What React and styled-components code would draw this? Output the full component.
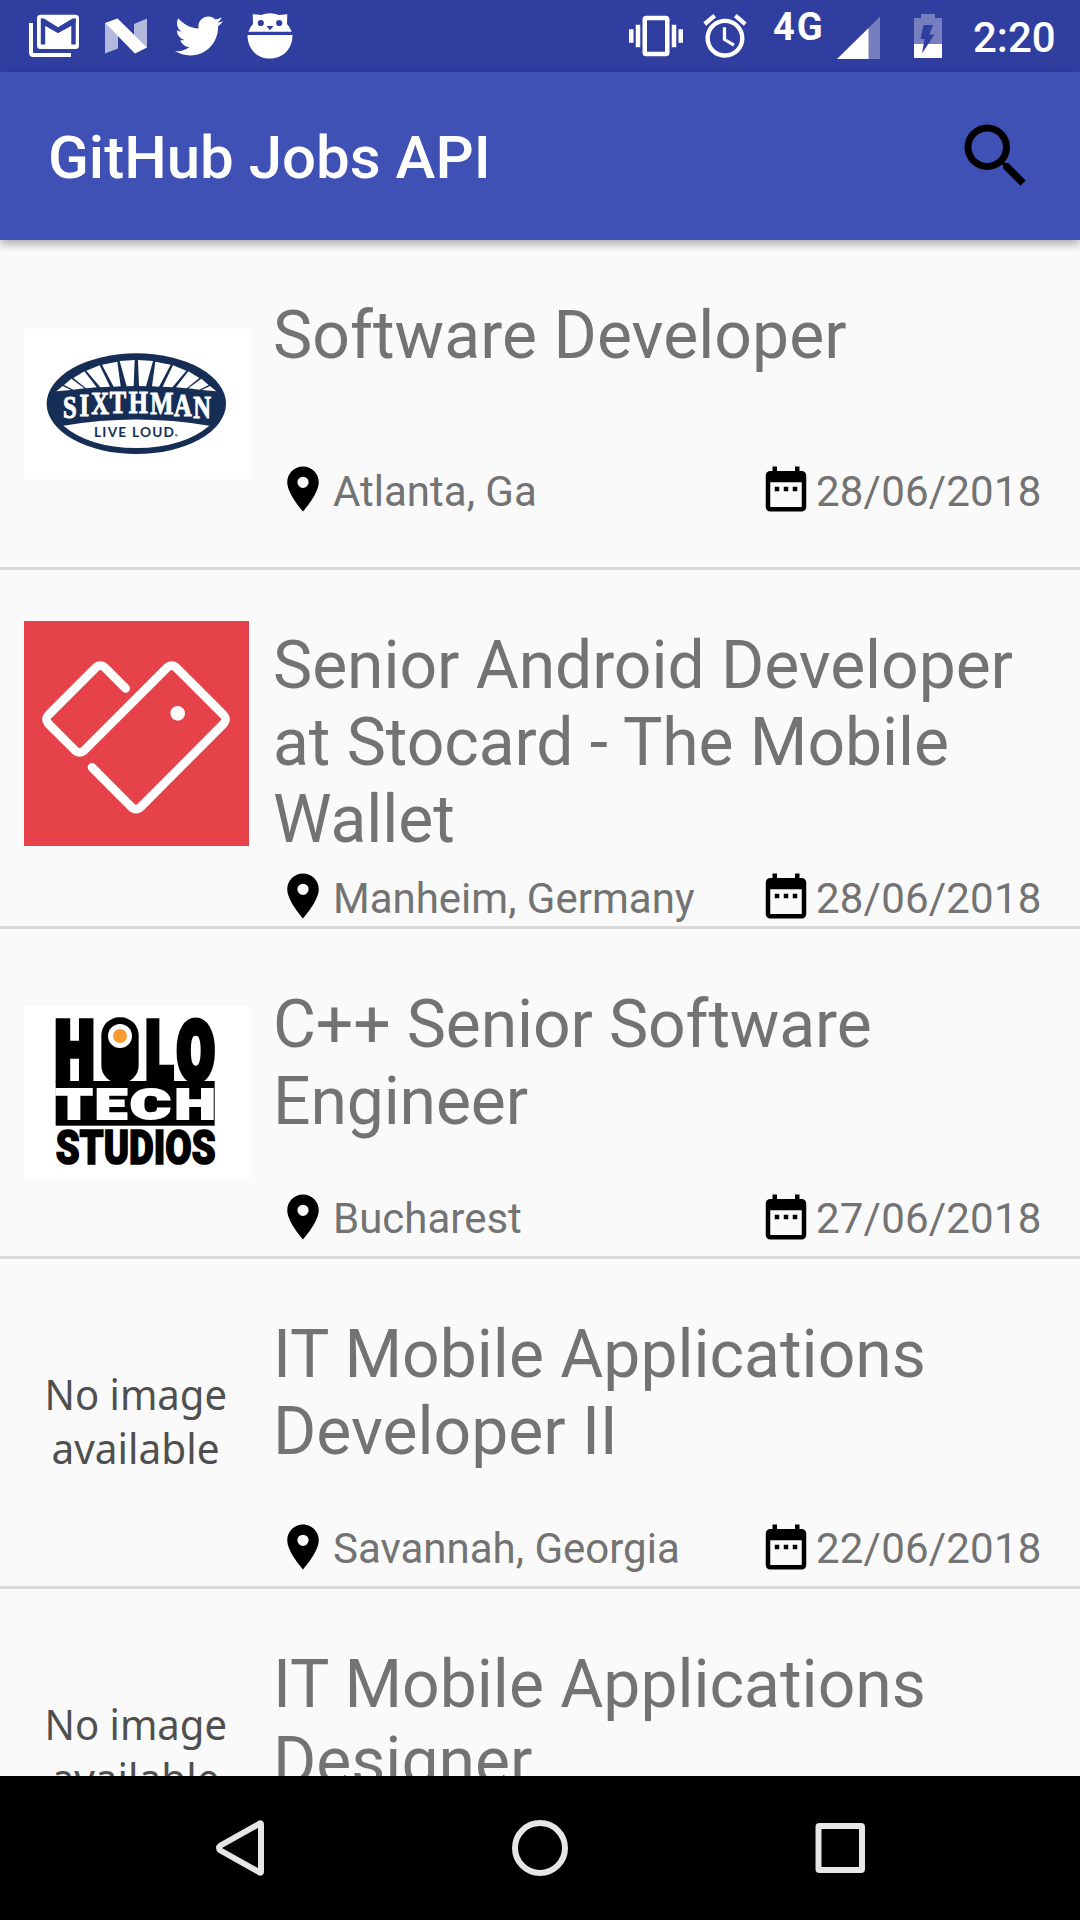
import React from "react";
import styled, { createGlobalStyle } from "styled-components";
import { MdPlace, MdDateRange, MdSearch, MdVibration, MdAccessAlarm } from "react-icons/md";
import { FaTwitter } from "react-icons/fa";

const GlobalStyle = createGlobalStyle`
  * { box-sizing: border-box; }
  body { margin: 0; background: #fafafa; font-family: Roboto, sans-serif; }
  svg { display: block; flex: none; overflow: visible; }
`;

const Screen = styled.div`
  display: flex;
  flex-direction: column;
  width: 1080px;
  height: 1920px;
  overflow: hidden;
  background: #fafafa;
`;

const StatusBar = styled.header`
  display: flex;
  align-items: center;
  justify-content: space-between;
  flex: none;
  height: 72px;
  padding: 0 23px 0 29px;
  background: #303f9f;
  color: #fff;
`;

const StatusGroup = styled.div`
  display: flex;
  align-items: center;
  height: 72px;
`;

const StatusItem = styled.span`
  display: flex;
  flex: none;
  width: ${(p) => p.$width}px;
  margin-left: ${(p) => p.$gap || 0}px;
  justify-content: center;
`;

const NetworkType = styled.span`
  flex: none;
  width: 64px;
  margin-left: 22px;
  padding-bottom: 19px;
  font-size: 38px;
  line-height: 44px;
  font-weight: 700;
  letter-spacing: 2px;
`;

const Clock = styled.time`
  width: 84px;
  margin-left: 31px;
  padding-top: 2px;
  font-size: 42px;
  line-height: 49px;
  font-weight: 500;
  white-space: nowrap;
`;

const AppBar = styled.div`
  position: relative;
  z-index: 1;
  display: flex;
  align-items: center;
  justify-content: space-between;
  flex: none;
  height: 168px;
  padding: 0 42px 0 48px;
  background: #3f51b5;
  box-shadow: 0 4px 9px rgba(0, 0, 0, 0.32);
`;

const AppTitle = styled.h1`
  margin: 0;
  padding-top: 4px;
  color: #fff;
  font-size: 60px;
  line-height: 70px;
  font-weight: 500;
`;

const SearchButton = styled.button`
  display: flex;
  padding: 0;
  border: 0;
  background: none;
  color: #000;
`;

const List = styled.ul`
  flex: 1;
  min-height: 0;
  margin: 0;
  padding: 0;
  overflow: hidden;
  list-style: none;
`;

const Row = styled.li`
  height: ${(p) => p.$height + 3}px;
  border-bottom: 3px solid #dadada;
`;

const RowBody = styled.article`
  display: flex;
  align-items: center;
  gap: 24px;
  height: 327px;
  padding: 0 24px;
`;

const Details = styled.div`
  display: flex;
  flex-direction: column;
  flex: 1;
  min-width: 0;
  height: 327px;
  padding-top: 57px;
`;

const JobTitle = styled.h2`
  flex: none;
  margin: 0;
  color: #737373;
  font-size: 66px;
  line-height: 77px;
  font-weight: 400;
  letter-spacing: ${(p) => p.$tracking || 0}px;
  white-space: pre-line;
`;

const Meta = styled.div`
  display: flex;
  align-items: center;
  flex: 1 1 0;
  min-height: 0;
  margin-top: 37px;
  padding-left: 3px;
`;

const MetaItem = styled.span`
  display: flex;
  align-items: center;
  flex: none;
  gap: 3px;
  width: ${(p) => p.$width}px;
  color: #000;
`;

const MetaText = styled.span`
  padding-top: 4px;
  color: #737373;
  font-size: 42px;
  line-height: 49px;
  letter-spacing: ${(p) => p.$tracking || 0}px;
  white-space: nowrap;
`;

const NavBar = styled.nav`
  display: flex;
  align-items: center;
  justify-content: center;
  gap: 240px;
  flex: none;
  height: 144px;
  background: #000;
`;

const GmailIcon = () => (
  <svg width="50" height="72" viewBox="29 0 50 72">
    <path d="M31 23V52.5Q31 55 33.500 55H71" fill="none" stroke="#fff" strokeWidth="4" />
    <rect x="37" y="14.700" width="42" height="34.300" rx="3.500" fill="#fff" />
    <path d="M43 44.500V22L58 30.500L73.500 22V44.500" fill="none" stroke="#303f9f" strokeWidth="4.400" />
    <path d="M41 18.500H44L58 27.200L72.500 18.500H75.700V23L58 33L41 23Z" fill="#303f9f" />
  </svg>
);

const NougatIcon = () => (
  <svg width="42" height="72" viewBox="105 0 42 72">
    <path d="M105 23L118 36V48.500L105 53.500Z M134 24L147 18.500V48L134 35Z" fill="#b3b8dd" />
    <path d="M105 23L117.500 18.500L147 47.500L135 53.500Z" fill="#fff" />
  </svg>
);

const OwlIcon = () => (
  <svg width="46" height="72" viewBox="247 0 46 72">
    <path d="M248.300 31.800Q250 27 253 24L252.700 14.200L261 15Q270 11.500 279 15L287.300 14.200L287 24Q290 27 291.700 31.800Z" fill="#fff" />
    <path d="M247.500 35H292.500C292.500 49 283 58.500 270 58.500S247.500 49 247.500 35Z" fill="#fff" />
    <circle cx="260.800" cy="23" r="3.100" fill="#303f9f" />
    <circle cx="279.200" cy="23" r="3.100" fill="#303f9f" />
    <path d="M266.500 26H273.500L270 30.300Z" fill="#303f9f" />
  </svg>
);

const SignalIcon = () => (
  <svg width="43" height="72" viewBox="837 0 43 72">
    <path d="M880 16.500V59H868V28.500Z" fill="#757ebe" />
    <path d="M868.500 28V59H837Z" fill="#fff" />
  </svg>
);

const BatteryIcon = () => (
  <svg width="28" height="72" viewBox="914 0 28 72">
    <path d="M921 14H935V18H942V44H914V18H921Z" fill="#757ebe" />
    <path d="M914 44H942V58H914Z" fill="#fff" />
    <path d="M923.500 25H933L929.500 34.500H934.500L922 53.500L924.500 39H920.500Z" fill="#303f9f" />
  </svg>
);

const RAYS = [
  "359,153 404,150 401,228 380,229",
  "306,164 352,155 362,229 341,230",
  "259,182 299,166 330,230 301,232",
  "220,204 253,184 290,232 258,235",
  "192,225 214,206 253,235 220,239",
  "169,244 188,228 213,240",
];

const SixthmanLogo = () => (
  <svg width="225" height="150" viewBox="72 57 675 450">
    <rect x="72" y="57" width="675" height="450" fill="#fff" />
    <ellipse cx="409" cy="281" rx="269" ry="151" fill="#162e56" />
    {RAYS.map((points) => (
      <g key={points} fill="#fff">
        <polygon points={points} />
        <polygon points={points} transform="translate(818 0) scale(-1 1)" />
      </g>
    ))}
    <path d="M190 347Q409 310 628 347Q550 413 409 414Q268 413 190 347Z" fill="#fff" />
    <text
      transform="scale(0.8 1)"
      x="236 298 342 412 483 563 653 725"
      y="323 317 312 309 309 312 317 324"
      fill="#fff"
      stroke="#fff"
      strokeWidth="3"
      fontFamily="'Liberation Serif', serif"
      fontWeight="700"
      fontSize="92"
    >
      SIXTHMAN
    </text>
    <text x="282" y="381" fill="#162e56" fontFamily="Lato, sans-serif" fontWeight="700" fontSize="41" textLength="240" lengthAdjust="spacing">LIVE LOUD</text>
    <circle cx="529" cy="376" r="4" fill="#7784a0" />
  </svg>
);

const StocardLogo = () => (
  <svg width="225" height="225" viewBox="72 63 675 675">
    <rect x="72" y="63" width="675" height="675" fill="#e64249" />
    <g fill="none" stroke="#fff" strokeWidth="26" strokeLinecap="round" strokeLinejoin="round">
      <path d="M377 265L317 205Q301 189 285 205L147 343Q132 358 147 373L224 450Q239 465 254 450L499 205Q515 189 531 205L669 343Q684 358 669 373L423 620Q408 635 393 620L276 502" />
    </g>
    <circle cx="533" cy="340" r="22" fill="#fff" />
  </svg>
);

const LogoWord = ({ x, y, size, width, fill = "#000", outline = 0, children }) => (
  <text
    x={x}
    y={y}
    fill={fill}
    stroke={fill}
    strokeWidth={outline}
    fontFamily="Roboto, sans-serif"
    fontWeight="900"
    fontSize={size}
    textLength={width}
    lengthAdjust="spacingAndGlyphs"
  >
    {children}
  </text>
);

const HolotechLogo = () => (
  <svg width="225" height="173" viewBox="72 48 675 519">
    <rect x="72" y="48" width="675" height="519" fill="#fff" />
    <rect x="167" y="273" width="477" height="134" />
    <LogoWord x="166" y="267" size="238" width="116" outline="22">H</LogoWord>
    <rect x="304" y="82" width="112" height="198" rx="54" />
    <LogoWord x="438" y="267" size="238" width="80" outline="22">L</LogoWord>
    <LogoWord x="532" y="267" size="238" width="111" outline="22">O</LogoWord>
    <circle cx="360" cy="138" r="36" fill="#fff" />
    <circle cx="360" cy="138" r="21" fill="#f99b33" />
    <LogoWord x="167" y="386" size="126" width="110" fill="#fff" outline="6">T</LogoWord>
    <LogoWord x="285" y="386" size="126" width="96" fill="#fff" outline="6">E</LogoWord>
    <LogoWord x="390" y="386" size="126" width="122" fill="#fff" outline="6">C</LogoWord>
    <LogoWord x="524" y="386" size="126" width="122" fill="#fff" outline="6">H</LogoWord>
    <LogoWord x="167" y="521" size="146" width="480" outline="5">STUDIOS</LogoWord>
  </svg>
);

const NoImage = () => (
  <svg width="225" height="225" viewBox="24 51 225 225" fill="#4f4f4f" fontFamily="'Noto Sans', sans-serif" fontSize="42.500">
    <text x="44.500" y="150.500" textLength="182.500" lengthAdjust="spacingAndGlyphs">No image</text>
    <text x="51.500" y="205" textLength="168" lengthAdjust="spacingAndGlyphs">available</text>
  </svg>
);

const JOBS = [
  { id: 1, title: "Software Developer", tracking: 0.06, place: "Atlanta, Ga", date: "28/06/2018", Logo: SixthmanLogo, height: 327 },
  { id: 2, title: "Senior Android Developer\nat Stocard - The Mobile\nWallet", tracking: -0.06, place: "Manheim, Germany", date: "28/06/2018", Logo: StocardLogo, height: 356 },
  { id: 3, title: "C++ Senior Software\nEngineer", tracking: -0.12, place: "Bucharest", date: "27/06/2018", Logo: HolotechLogo, height: 327 },
  { id: 4, title: "IT Mobile Applications\nDeveloper II", place: "Savannah, Georgia", date: "22/06/2018", Logo: NoImage, height: 327 },
  { id: 5, title: "IT Mobile Applications\nDesigner", Logo: NoImage, height: 327 },
];

const JobRow = ({ job }) => (
  <Row $height={job.height}>
    <RowBody>
      <job.Logo />
      <Details>
        <JobTitle $tracking={job.tracking}>{job.title}</JobTitle>
        {job.place && (
          <Meta>
            <MetaItem $width={483}>
              <MdPlace size={54} />
              <MetaText>{job.place}</MetaText>
            </MetaItem>
            <MetaItem $width={290}>
              <MdDateRange size={54} />
              <MetaText $tracking={0.2}>{job.date}</MetaText>
            </MetaItem>
          </Meta>
        )}
      </Details>
    </RowBody>
  </Row>
);

export default function App() {
  return (
    <Screen>
      <GlobalStyle />
      <StatusBar>
        <StatusGroup>
          <StatusItem $width={50}><GmailIcon /></StatusItem>
          <StatusItem $width={42} $gap={26}><NougatIcon /></StatusItem>
          <StatusItem $width={48} $gap={28}><FaTwitter size={48} /></StatusItem>
          <StatusItem $width={46} $gap={24}><OwlIcon /></StatusItem>
        </StatusGroup>
        <StatusGroup>
          <StatusItem $width={54}><MdVibration size={54} /></StatusItem>
          <StatusItem $width={52} $gap={16}><MdAccessAlarm size={52} /></StatusItem>
          <NetworkType>4G</NetworkType>
          <StatusItem $width={43}><SignalIcon /></StatusItem>
          <StatusItem $width={28} $gap={34}><BatteryIcon /></StatusItem>
          <Clock>2:20</Clock>
        </StatusGroup>
      </StatusBar>
      <AppBar>
        <AppTitle>GitHub Jobs API</AppTitle>
        <SearchButton aria-label="Search"><MdSearch size={84} /></SearchButton>
      </AppBar>
      <List>
        {JOBS.map((job) => <JobRow key={job.id} job={job} />)}
      </List>
      <NavBar>
        <svg width="60" height="60" viewBox="210 1818 60 60">
          <path d="M261 1824.500V1871.500Q261 1873.500 259 1872L220.500 1850.500Q217.500 1848 220.500 1845.500L259 1824Q261 1822.500 261 1824.500Z" fill="none" stroke="#e6e6e6" strokeWidth="6" strokeLinejoin="round" />
        </svg>
        <svg width="60" height="60" viewBox="-30 -30 60 60">
          <circle r="25" fill="none" stroke="#e6e6e6" strokeWidth="6" />
        </svg>
        <svg width="60" height="60" viewBox="-30 -30 60 60">
          <rect x="-21.500" y="-22" width="43.500" height="44" rx="1" fill="none" stroke="#e6e6e6" strokeWidth="6" />
        </svg>
      </NavBar>
    </Screen>
  );
}
